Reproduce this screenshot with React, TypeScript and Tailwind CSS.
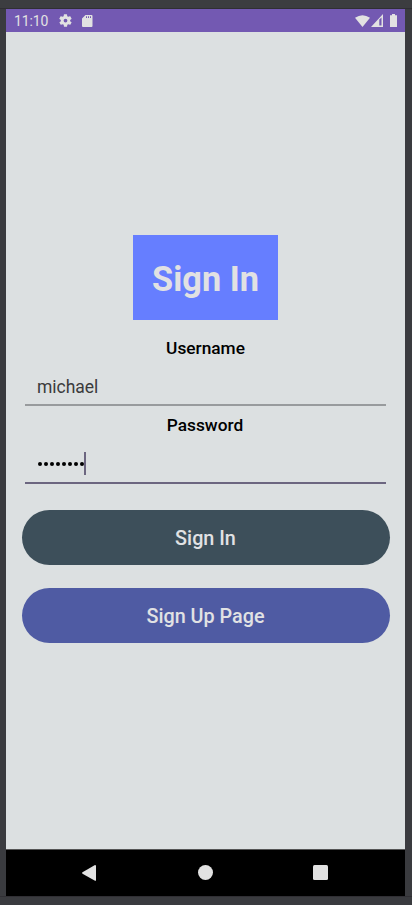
import React from 'react';

function StatusBar() {
  return (
    <header className="flex h-[23px] items-center bg-[#7359b2] pl-2 pr-2 text-[#e2e2e2]">
      <span className="w-[35px] whitespace-nowrap pt-[2px] text-[14px] leading-[23px] tracking-[-0.1px]">11:10</span>
      <svg className="ml-[9px] h-[15px] w-[15px]" viewBox="0 0 24 24" fill="currentColor">
        <path d="M19.4 13a7.5 7.5 0 0 0 0-2l2.1-1.6a.5.5 0 0 0 .1-.7l-2-3.4a.5.5 0 0 0-.6-.2l-2.5 1a7.3 7.3 0 0 0-1.7-1l-.4-2.7a.5.5 0 0 0-.5-.4h-4a.5.5 0 0 0-.5.4L9 5.100a7.700 7.700 0 0 0-1.700 1l-2.500-1a.5.5 0 0 0-.6.2l-2 3.400a.5.5 0 0 0 .1.700L4.600 11a7.900 7.900 0 0 0 0 2l-2.200 1.600a.5.5 0 0 0-.1.700l2 3.400c.1.200.4.300.6.200l2.500-1c.5.400 1.100.7 1.700 1l.4 2.700c0 .2.200.4.500.4h4c.2 0 .4-.2.500-.4l.4-2.700c.6-.2 1.200-.6 1.700-1l2.500 1c.2.100.5 0 .6-.2l2-3.400a.5.500 0 0 0-.1-.7zM12 15a3 3 0 1 1 0-6 3 3 0 0 1 0 6z" />
      </svg>
      <svg className="ml-[9px] h-3 w-[11px]" viewBox="0 0 11 12" fill="currentColor">
        <path fillRule="evenodd" d="M3.500 0H9.500Q10.500 0 10.500 1V11Q10.500 12 9.500 12H1Q0 12 0 11V3.500ZM4 1.200V3H5V1.200ZM6 1.200V3H7V1.200ZM8 1.200V3H9V1.200Z" />
      </svg>
      <svg className="ml-auto h-3 w-[15px]" viewBox="0 0 15 12" fill="currentColor">
        <path d="M0 2.700Q7.500-2.300 15 2.700L7.500 12Z" />
      </svg>
      <svg className="ml-px h-[13px] w-3" viewBox="0 0 12 13" fill="currentColor">
        <path fillRule="evenodd" d="M12 0V13H0ZM8.300 5.500V11.500H10.500V3.500Z" />
      </svg>
      <svg className="ml-[7px] h-[13px] w-[7px]" viewBox="0 0 7 13" fill="currentColor">
        <path d="M2 0H5V1.300H7V13H0V1.300H2Z" />
      </svg>
    </header>
  );
}

function NavigationBar() {
  return (
    <nav className="flex h-[47px] items-center justify-between border-t border-[#555] bg-black pb-px pl-[76px] pr-[77px] text-[#e2e2e2]">
      <svg className="h-4 w-[14px]" viewBox="0 0 14 16" fill="currentColor">
        <path d="M13 0Q14 0 14 .7V15.300Q14 16 13 15.800L.5 8.700Q-.3 8 .5 7.300Z" />
      </svg>
      <span className="ml-px h-[15px] w-[15px] rounded-full bg-[#e2e2e2]" />
      <span className="h-[15px] w-[15px] rounded-[1.500px] bg-[#e2e2e2]" />
    </nav>
  );
}

export default function App() {
  return (
    <div className="h-[905px] w-[412px] overflow-hidden bg-[#3a3b3f] pl-[6px] pr-[7px] font-['Roboto',sans-serif]">
      <div className="-ml-[6px] -mr-[7px] h-[9px] border-b border-[#302f34] bg-[#3c3d40]" />
      <div className="flex h-[887px] flex-col bg-[#dce0e1]">
        <StatusBar />
        <main className="flex flex-1 flex-col items-center pt-[203px]">
          <h1 className="flex h-[85px] w-[145px] items-center justify-center bg-[#667eff] pt-[5px] text-[34.300px] font-bold text-[#e1e1e3]">
            Sign In
          </h1>
          <div className="mt-[17px] h-[22px] text-[17.300px] font-medium leading-[22px] text-black">Username</div>
          <div className="mt-[11px] flex h-[36px] w-[361px] items-center border-b-2 border-[#989b9d] pl-3 text-[17.500px] tracking-[-0.04px] text-[#3b3b3c]">
            michael
          </div>
          <div className="mt-[8px] h-[22px] pr-px text-[17.300px] font-medium leading-[22px] text-black">Password</div>
          <div className="mt-[16px] flex h-[32px] w-[361px] border-b-2 border-[#6c6680] pl-[13px]">
            <div className="mt-[10px] flex h-1 gap-[2px]">
              {Array.from({ length: 8 }, (_, i) => (
                <span key={i} className="h-1 w-1 rounded-full bg-black" />
              ))}
            </div>
            <span className="h-[23px] w-[2px] bg-[#6c6680]" />
          </div>
          <button className="mt-[26px] h-[55px] w-[368px] rounded-full bg-[#3d4f5a] pt-[2px] text-[19.800px] font-medium text-[#e1e2e4]">
            Sign In
          </button>
          <button className="mt-[23px] h-[55px] w-[368px] rounded-full bg-[#4f5ba3] pt-[2px] text-[19.800px] font-medium text-[#e1e2e4]">
            Sign Up Page
          </button>
        </main>
        <NavigationBar />
      </div>
      <div className="-ml-[6px] -mr-[7px] h-[9px] border-t border-[#302f34]" />
    </div>
  );
}
